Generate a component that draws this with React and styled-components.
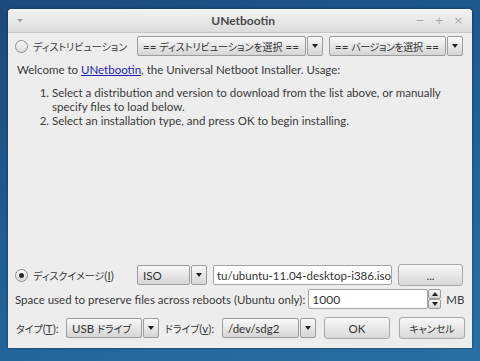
import React from 'react'
import styled, { createGlobalStyle } from 'styled-components'

const GlobalStyle = createGlobalStyle`
    html, body {
        margin: 0;
        padding: 0;
    }
    body {
        width: 480px;
        height: 361px;
        overflow: hidden;
        background: linear-gradient(160deg, #1b4a7c 0%, #1f5d92 45%, #2a70a2 100%);
        font-family: Lato, "Noto Sans CJK JP", sans-serif;
        font-size: 11.5px;
        color: #3a3a3a;
    }
`

const Window = styled.div`
    margin: 9px 8px 0 8px;
    width: 464px;
    height: 339px;
    display: flex;
    flex-direction: column;
    background: #ededed;
    border-radius: 4px 4px 0 0;
    box-shadow: 0 0 3px rgba(0, 0, 0, 0.45);
    overflow: hidden;
`

const TitleBar = styled.div`
    height: 23px;
    display: flex;
    align-items: center;
    padding: 0 9px 0 9px;
    background: linear-gradient(#f3f3f3, #dcdcdc);
    border-bottom: 1px solid #c6c6c6;
    .menu {
        width: 8px;
        height: 6px;
        display: flex;
        align-items: center;
        &::after {
            content: '';
            border-left: 3px solid transparent;
            border-right: 3px solid transparent;
            border-top: 3px solid #9a9a9a;
        }
    }
    .title {
        flex: 1;
        text-align: center;
        font-weight: bold;
        color: #4a4a4a;
        font-size: 12px;
        padding-left: 46px;
    }
    .controls {
        display: flex;
        gap: 10px;
        color: #a8a8a8;
        font-family: "DejaVu Sans", sans-serif;
        font-size: 11px;
    }
`

const Body = styled.div`
    flex: 1;
    display: flex;
    flex-direction: column;
    padding: 2px 9px 9px 7px;
`

const Row = styled.div`
    display: flex;
    align-items: center;
    gap: ${(p) => p.$gap ?? 6}px;
    height: 22px;
    flex-shrink: 0;
    margin-top: ${(p) => p.$mt || 0}px;
`

const Radio = styled.span`
    box-sizing: border-box;
    width: 13px;
    height: 13px;
    flex-shrink: 0;
    border-radius: 50%;
    border: 1px solid #8e8e8e;
    background: linear-gradient(#fbfbfb, #dadada);
    display: inline-flex;
    align-items: center;
    justify-content: center;
    &::after {
        content: '';
        width: 5px;
        height: 5px;
        border-radius: 50%;
        background: ${(p) => (p.$checked ? '#2a2a2a' : 'transparent')};
    }
`

const Label = styled.span`
    white-space: nowrap;
    flex-shrink: 0;
    width: ${(p) => (p.$w ? `${p.$w}px` : 'auto')};
    flex-grow: ${(p) => (p.$grow ? 1 : 0)};
    margin-left: ${(p) => p.$ml || 0}px;
    overflow: hidden;
`

const Jp = styled.span`
    font-family: "Noto Sans CJK JP", sans-serif;
    font-size: 10px;
    font-feature-settings: "palt" 1;
    letter-spacing: ${(p) => p.$ls || 0}px;
`

const Combo = styled.div`
    display: flex;
    gap: 1px;
    width: ${(p) => p.$w}px;
    height: 20px;
    flex-shrink: 0;
    margin-left: ${(p) => p.$ml || 0}px;
`

const ComboText = styled.div`
    flex: 1;
    display: flex;
    align-items: center;
    padding: 0 4px 0 5px;
    border: 1px solid #9c9c9c;
    border-radius: 2px;
    background: linear-gradient(#f9f9f9, #d5d5d5);
    white-space: nowrap;
    overflow: hidden;
    color: #333;
`

const ComboArrow = styled.div`
    width: 14px;
    border: 1px solid #9c9c9c;
    border-radius: 2px;
    background: linear-gradient(#f9f9f9, #d5d5d5);
    display: flex;
    align-items: center;
    justify-content: center;
    &::after {
        content: '';
        border-left: 3.5px solid transparent;
        border-right: 3.5px solid transparent;
        border-top: 4px solid #222;
    }
`

const Welcome = styled.p`
    margin: 5px 0 0 2px;
    line-height: 16px;
    a {
        color: #1e1eb4;
        text-decoration: underline;
    }
`

const Steps = styled.ol`
    margin: 8px 0 0 0;
    padding-left: 37px;
    line-height: 14px;
`

const Spacer = styled.div`
    flex: 1;
`

const TextInput = styled.div`
    width: ${(p) => p.$w}px;
    height: 20px;
    flex-shrink: 0;
    display: flex;
    align-items: center;
    padding: 0 3px;
    box-sizing: border-box;
    border: 1px solid #a4a4a4;
    border-radius: 2px;
    background: #fff;
    white-space: nowrap;
    overflow: hidden;
    color: #333;
    font-size: ${(p) => p.$fs || 12}px;
`

const SpinBox = styled.div`
    display: flex;
    align-items: center;
    flex-shrink: 0;
`

const Spin = styled.div`
    display: flex;
    flex-direction: column;
    width: 13px;
    height: 20px;
    span {
        flex: 1;
        border: 1px solid #9c9c9c;
        border-radius: 2px;
        background: linear-gradient(#f9f9f9, #d5d5d5);
        display: flex;
        align-items: center;
        justify-content: center;
    }
    .up::after {
        content: '';
        border-left: 3px solid transparent;
        border-right: 3px solid transparent;
        border-bottom: 4px solid #222;
    }
    .down::after {
        content: '';
        border-left: 3px solid transparent;
        border-right: 3px solid transparent;
        border-top: 4px solid #222;
    }
`

const Button = styled.div`
    width: ${(p) => p.$w}px;
    height: 22px;
    box-sizing: border-box;
    flex-shrink: 0;
    margin-left: ${(p) => p.$ml || 0}px;
    display: flex;
    align-items: center;
    justify-content: center;
    border: 1px solid #a8a8a8;
    border-radius: 3px;
    background: linear-gradient(#f7f7f7, #d8d8d8);
    color: #333;
`

const App = () => (
    <>
        <GlobalStyle />
        <Window>
            <TitleBar>
                <span className="menu" />
                <span className="title">UNetbootin</span>
                <span className="controls">
                    <span>−</span>
                    <span>+</span>
                    <span>×</span>
                </span>
            </TitleBar>
            <Body>
                <Row $gap={5}>
                    <Radio />
                    <Label $w={98}>
                        <Jp>ディストリビューション</Jp>
                    </Label>
                    <Combo $w={186} $ml={1}>
                        <ComboText>
                            ==&nbsp;<Jp>ディストリビューションを選択</Jp>&nbsp;==
                        </ComboText>
                        <ComboArrow />
                    </Combo>
                    <Combo $w={134} $ml={1}>
                        <ComboText>
                            ==&nbsp;<Jp $ls={-0.4}>バージョンを選択</Jp>&nbsp;==
                        </ComboText>
                        <ComboArrow />
                    </Combo>
                </Row>
                <Welcome>
                    Welcome to <a href="#">UNetbootin</a>, the Universal Netboot Installer. Usage:
                </Welcome>
                <Steps>
                    <li>
                        Select a distribution and version to download from the list above, or manually
                        <br />
                        specify files to load below.
                    </li>
                    <li>Select an installation type, and press OK to begin installing.</li>
                </Steps>
                <Spacer />
                <Row $gap={5}>
                    <Radio $checked />
                    <Label $w={98}>
                        <Jp>ディスクイメージ</Jp>(<u>I</u>)
                    </Label>
                    <Combo $w={70} $ml={1}>
                        <ComboText>ISO</ComboText>
                        <ComboArrow />
                    </Combo>
                    <TextInput $w={179} $fs={11.5} style={{ marginLeft: 1 }}>
                        tu/ubuntu-11.04-desktop-i386.iso
                    </TextInput>
                    <Button $w={65} $ml={1}>
                        ...
                    </Button>
                </Row>
                <Row $mt={2} $gap={3}>
                    <Label $grow>Space used to preserve files across reboots (Ubuntu only):</Label>
                    <SpinBox>
                        <TextInput $w={120}>1000</TextInput>
                        <Spin>
                            <span className="up" />
                            <span className="down" />
                        </Spin>
                    </SpinBox>
                    <Label $w={18} $ml={2}>
                        MB
                    </Label>
                </Row>
                <Row $mt={7} $gap={5}>
                    <Label $w={45} $ml={1}>
                        <Jp>タイプ</Jp>(<u>T</u>):
                    </Label>
                    <Combo $w={93}>
                        <ComboText>
                            USB&nbsp;<Jp>ドライブ</Jp>
                        </ComboText>
                        <ComboArrow />
                    </Combo>
                    <Label $w={52} $ml={1}>
                        <Jp>ドライブ</Jp>(<u>v</u>):
                    </Label>
                    <Combo $w={94}>
                        <ComboText>/dev/sdg2</ComboText>
                        <ComboArrow />
                    </Combo>
                    <Button $w={66} $ml={3}>
                        OK
                    </Button>
                    <Button $w={66} $ml={4}>
                        <Jp>キャンセル</Jp>
                    </Button>
                </Row>
            </Body>
        </Window>
    </>
)

export default App
